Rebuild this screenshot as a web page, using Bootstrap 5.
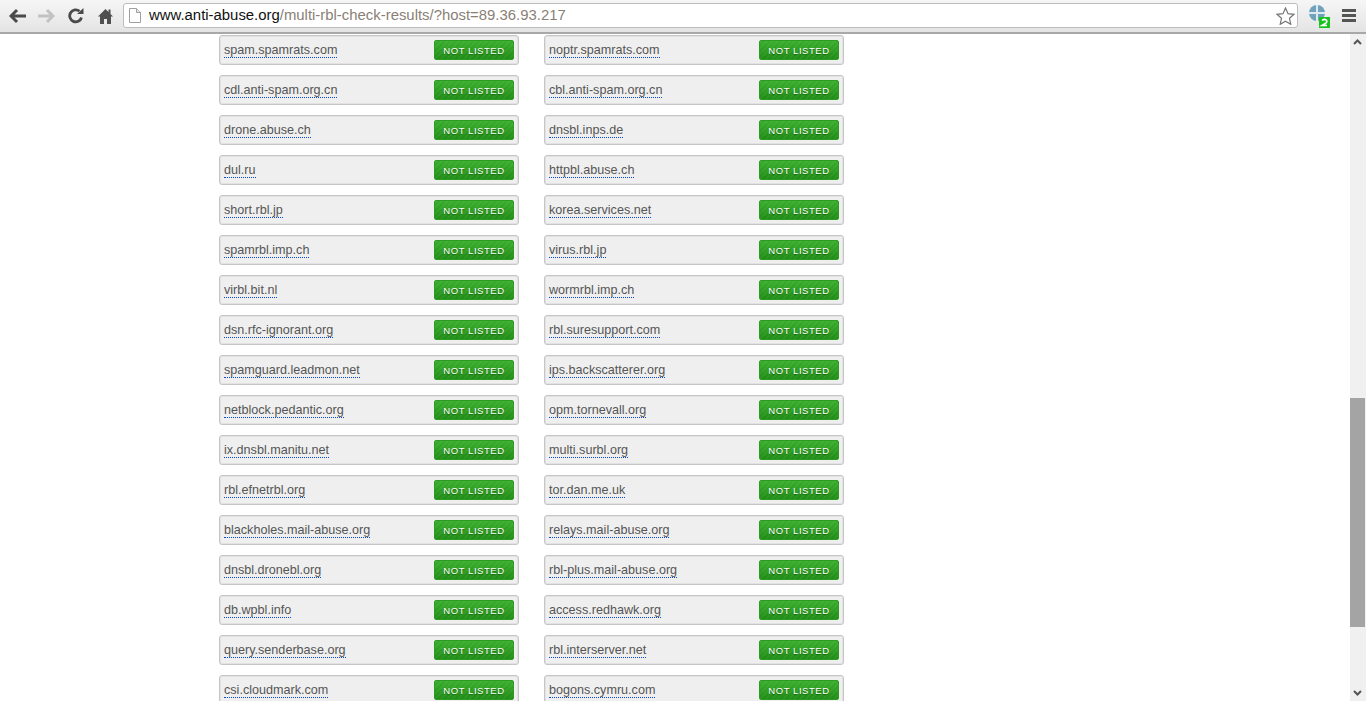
<!DOCTYPE html>
<html lang="en"><head><meta charset="utf-8"><title>Multi RBL check results</title>
<link href="https://cdn.jsdelivr.net/npm/bootstrap@5.3.0/dist/css/bootstrap.min.css" rel="stylesheet">
<style>
html,body{height:701px;overflow:hidden;background:#fff;font-family:"Liberation Sans",Arial,sans-serif}
.chrome-bar{height:34px;padding-bottom:1px;background:linear-gradient(#f6f6f6,#e4e4e4);border-bottom:2px solid #a8a8a8}
.tool-ico{flex:none;display:block}
.url-box{width:1175px;height:25px;margin-left:10px;background:#fff;border:1px solid #bdbdbd;border-radius:3px;font-size:14.9px;line-height:23px;padding-left:5px}
.url-host{color:#111}.url-path{color:#8a7f76}
.page-area{height:667px}
.result-scroll{width:1350px;overflow:hidden}
.rbl-grid{display:grid;grid-template-columns:300px 300px;column-gap:25px;row-gap:10px;margin:1px 0 0 219px;width:625px}
.rbl-item{height:30px;background:#efefef;border:1px solid #c6c6c6;border-radius:3px;box-shadow:inset 0 0 0 1px #e2e2e2;padding:0 4px}
.rbl-name{font-size:12.6px;color:#555;text-decoration:none;border-bottom:1px dotted #0645e0;line-height:13px;margin-top:2px}
.listed-tag{width:80px;height:20px;background:repeating-linear-gradient(135deg,rgba(255,255,255,.05) 0 2px,transparent 2px 4px),linear-gradient(#39ad2c,#1f8c15);border:1px solid #2d9a22;border-radius:2px;color:#fff;font-size:9.5px;letter-spacing:.55px;line-height:19px;text-align:center;text-shadow:0 1px 1px #14660c}
.sb-track{width:16px;background:#f0f0f0}
.sb-thumb{width:15px;height:229px;background:#a4a4a4}
.sb-gap-top{height:364px}
</style></head><body>
<div class="chrome-bar d-flex align-items-center">
<svg class="tool-ico" style="margin-left:9px" width="17" height="16" viewBox="0 0 17 16"><path d="M8 2 2 8l6 6M2 8h15" fill="none" stroke="#4a4a4a" stroke-width="3"/></svg>
<svg class="tool-ico" style="margin-left:12px" width="17" height="16" viewBox="0 0 17 16"><path d="M9 2l6 6-6 6M15 8H0" fill="none" stroke="#c2c2c2" stroke-width="3"/></svg>
<svg class="tool-ico" style="margin-left:13px" width="16" height="16" viewBox="0 0 16 16"><path d="M13.500 9.500A6 6 0 1 1 11.500 3.200" fill="none" stroke="#4a4a4a" stroke-width="2.800"/><path d="M9 6h6.500V0z" fill="#4a4a4a"/></svg>
<svg class="tool-ico" style="margin-left:14px" width="15" height="16" viewBox="0 0 15 16"><path d="M7.500 1 0 8.500h2V16h4v-5h3v5h4V8.500h2L12.500 6V1.500h-2v2.500z" fill="#4f4f4f"/></svg>
<div class="url-box d-flex align-items-center position-relative"><svg class="tool-ico me-2" width="12" height="15" viewBox="0 0 12 15"><path d="M.5.500h7l4 4v10H.500z" fill="#fff" stroke="#a0a0a0"/><path d="M7.500.500v4h4" fill="#e6e6e6" stroke="#a0a0a0"/></svg><span><span class="url-host">www.anti-abuse.org</span><span class="url-path">/multi-rbl-check-results/?host=89.36.93.217</span></span>
<svg class="tool-ico ms-auto" style="margin-right:2px" width="19" height="18" viewBox="0 0 19 18"><path d="M9.500 1l2.500 5.700 6 .6-4.500 4 1.300 6-5.300-3.100-5.300 3.100 1.300-6-4.500-4 6-.6z" fill="#fff" stroke="#777" stroke-width="1.200"/></svg></div>
<svg class="tool-ico" style="margin-left:10px" width="22" height="24" viewBox="0 0 22 24"><circle cx="9" cy="9" r="8" fill="#6fa3bd"/><path d="M9 1v16M1 9h16" stroke="#dfe9ee" stroke-width="2"/><rect x="11" y="13" width="11" height="11" fill="#18c21c"/><path d="M14 16.500q2.500-2 4.500-.2 1 1.500-.8 3l-3.700 2.200h5" fill="none" stroke="#fff" stroke-width="1.600"/></svg>
<svg class="tool-ico" style="margin-left:12px" width="14" height="13" viewBox="0 0 14 13"><path d="M0 0h14v3H0zM0 5h14v3H0zM0 10h14v3H0z" fill="#555"/></svg>
</div>
<div class="page-area d-flex">
<main class="result-scroll"><div class="rbl-grid">
<div class="rbl-item d-flex align-items-center justify-content-between"><a class="rbl-name" href="#">spam.spamrats.com</a><span class="listed-tag">NOT LISTED</span></div>
<div class="rbl-item d-flex align-items-center justify-content-between"><a class="rbl-name" href="#">noptr.spamrats.com</a><span class="listed-tag">NOT LISTED</span></div>
<div class="rbl-item d-flex align-items-center justify-content-between"><a class="rbl-name" href="#">cdl.anti-spam.org.cn</a><span class="listed-tag">NOT LISTED</span></div>
<div class="rbl-item d-flex align-items-center justify-content-between"><a class="rbl-name" href="#">cbl.anti-spam.org.cn</a><span class="listed-tag">NOT LISTED</span></div>
<div class="rbl-item d-flex align-items-center justify-content-between"><a class="rbl-name" href="#">drone.abuse.ch</a><span class="listed-tag">NOT LISTED</span></div>
<div class="rbl-item d-flex align-items-center justify-content-between"><a class="rbl-name" href="#">dnsbl.inps.de</a><span class="listed-tag">NOT LISTED</span></div>
<div class="rbl-item d-flex align-items-center justify-content-between"><a class="rbl-name" href="#">dul.ru</a><span class="listed-tag">NOT LISTED</span></div>
<div class="rbl-item d-flex align-items-center justify-content-between"><a class="rbl-name" href="#">httpbl.abuse.ch</a><span class="listed-tag">NOT LISTED</span></div>
<div class="rbl-item d-flex align-items-center justify-content-between"><a class="rbl-name" href="#">short.rbl.jp</a><span class="listed-tag">NOT LISTED</span></div>
<div class="rbl-item d-flex align-items-center justify-content-between"><a class="rbl-name" href="#">korea.services.net</a><span class="listed-tag">NOT LISTED</span></div>
<div class="rbl-item d-flex align-items-center justify-content-between"><a class="rbl-name" href="#">spamrbl.imp.ch</a><span class="listed-tag">NOT LISTED</span></div>
<div class="rbl-item d-flex align-items-center justify-content-between"><a class="rbl-name" href="#">virus.rbl.jp</a><span class="listed-tag">NOT LISTED</span></div>
<div class="rbl-item d-flex align-items-center justify-content-between"><a class="rbl-name" href="#">virbl.bit.nl</a><span class="listed-tag">NOT LISTED</span></div>
<div class="rbl-item d-flex align-items-center justify-content-between"><a class="rbl-name" href="#">wormrbl.imp.ch</a><span class="listed-tag">NOT LISTED</span></div>
<div class="rbl-item d-flex align-items-center justify-content-between"><a class="rbl-name" href="#">dsn.rfc-ignorant.org</a><span class="listed-tag">NOT LISTED</span></div>
<div class="rbl-item d-flex align-items-center justify-content-between"><a class="rbl-name" href="#">rbl.suresupport.com</a><span class="listed-tag">NOT LISTED</span></div>
<div class="rbl-item d-flex align-items-center justify-content-between"><a class="rbl-name" href="#">spamguard.leadmon.net</a><span class="listed-tag">NOT LISTED</span></div>
<div class="rbl-item d-flex align-items-center justify-content-between"><a class="rbl-name" href="#">ips.backscatterer.org</a><span class="listed-tag">NOT LISTED</span></div>
<div class="rbl-item d-flex align-items-center justify-content-between"><a class="rbl-name" href="#">netblock.pedantic.org</a><span class="listed-tag">NOT LISTED</span></div>
<div class="rbl-item d-flex align-items-center justify-content-between"><a class="rbl-name" href="#">opm.tornevall.org</a><span class="listed-tag">NOT LISTED</span></div>
<div class="rbl-item d-flex align-items-center justify-content-between"><a class="rbl-name" href="#">ix.dnsbl.manitu.net</a><span class="listed-tag">NOT LISTED</span></div>
<div class="rbl-item d-flex align-items-center justify-content-between"><a class="rbl-name" href="#">multi.surbl.org</a><span class="listed-tag">NOT LISTED</span></div>
<div class="rbl-item d-flex align-items-center justify-content-between"><a class="rbl-name" href="#">rbl.efnetrbl.org</a><span class="listed-tag">NOT LISTED</span></div>
<div class="rbl-item d-flex align-items-center justify-content-between"><a class="rbl-name" href="#">tor.dan.me.uk</a><span class="listed-tag">NOT LISTED</span></div>
<div class="rbl-item d-flex align-items-center justify-content-between"><a class="rbl-name" href="#">blackholes.mail-abuse.org</a><span class="listed-tag">NOT LISTED</span></div>
<div class="rbl-item d-flex align-items-center justify-content-between"><a class="rbl-name" href="#">relays.mail-abuse.org</a><span class="listed-tag">NOT LISTED</span></div>
<div class="rbl-item d-flex align-items-center justify-content-between"><a class="rbl-name" href="#">dnsbl.dronebl.org</a><span class="listed-tag">NOT LISTED</span></div>
<div class="rbl-item d-flex align-items-center justify-content-between"><a class="rbl-name" href="#">rbl-plus.mail-abuse.org</a><span class="listed-tag">NOT LISTED</span></div>
<div class="rbl-item d-flex align-items-center justify-content-between"><a class="rbl-name" href="#">db.wpbl.info</a><span class="listed-tag">NOT LISTED</span></div>
<div class="rbl-item d-flex align-items-center justify-content-between"><a class="rbl-name" href="#">access.redhawk.org</a><span class="listed-tag">NOT LISTED</span></div>
<div class="rbl-item d-flex align-items-center justify-content-between"><a class="rbl-name" href="#">query.senderbase.org</a><span class="listed-tag">NOT LISTED</span></div>
<div class="rbl-item d-flex align-items-center justify-content-between"><a class="rbl-name" href="#">rbl.interserver.net</a><span class="listed-tag">NOT LISTED</span></div>
<div class="rbl-item d-flex align-items-center justify-content-between"><a class="rbl-name" href="#">csi.cloudmark.com</a><span class="listed-tag">NOT LISTED</span></div>
<div class="rbl-item d-flex align-items-center justify-content-between"><a class="rbl-name" href="#">bogons.cymru.com</a><span class="listed-tag">NOT LISTED</span></div>
</div></main>
<div class="sb-track d-flex flex-column">
<div class="sb-gap-top"><svg class="d-block" style="margin:5px 0 0 3px" width="9" height="6" viewBox="0 0 9 6"><path d="M1 5l3.500-3.500L8 5" fill="none" stroke="#555" stroke-width="2"/></svg></div>
<div class="sb-thumb"></div>
<div class="flex-grow-1"></div>
<svg class="d-block" style="margin:0 0 5px 3px" width="9" height="6" viewBox="0 0 9 6"><path d="M1 1l3.500 3.500L8 1" fill="none" stroke="#555" stroke-width="2"/></svg>
</div>
</div>
<script src="https://cdn.jsdelivr.net/npm/bootstrap@5.3.0/dist/js/bootstrap.bundle.min.js"></script>
</body></html>
